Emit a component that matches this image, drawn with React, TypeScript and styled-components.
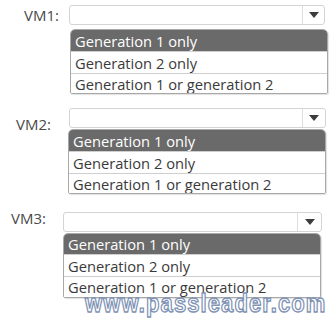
import styled, { createGlobalStyle } from 'styled-components';

const GlobalStyle = createGlobalStyle`
  *, *::before, *::after {
    box-sizing: border-box;
  }
  html, body {
    margin: 0;
    padding: 0;
    background: #ffffff;
  }
  body {
    font-family: 'Open Sans', 'Noto Sans', sans-serif;
  }
`;

const Page = styled.div`
  position: relative;
  width: 333px;
  height: 319px;
  overflow: hidden;
  display: flex;
  flex-direction: column;
`;

const Block = styled.div<{ $top: number; $left: number }>`
  display: flex;
  margin-top: ${({ $top }) => $top}px;
  padding-left: ${({ $left }) => $left}px;
`;

const Label = styled.div<{ $width: number; $offset: number }>`
  width: ${({ $width }) => $width}px;
  flex-shrink: 0;
  margin-top: ${({ $offset }) => $offset}px;
  font-size: 15px;
  color: #4a4a4a;
  line-height: 20px;
`;

const Column = styled.div<{ $width: number }>`
  width: ${({ $width }) => $width}px;
  display: flex;
  flex-direction: column;
`;

const Select = styled.div<{ $arrow: number; $gap: number }>`
  display: grid;
  grid-template-columns: 1fr ${({ $arrow }) => $arrow}px;
  height: 20px;
  margin-bottom: ${({ $gap }) => $gap}px;
  border: 1px solid #d4d4d4;
  border-radius: 3px;
  background: #fff;
`;

const ArrowCell = styled.div`
  border-left: 1px solid #dcdcdc;
  display: flex;
  align-items: center;
  justify-content: center;
`;

const Arrow = styled.div`
  width: 0;
  height: 0;
  border-left: 5px solid transparent;
  border-right: 5px solid transparent;
  border-top: 6px solid #3c3c3c;
`;

const List = styled.div<{ $shift: number; $extra: number }>`
  margin-left: ${({ $shift }) => $shift}px;
  margin-right: ${({ $extra }) => $extra}px;
  border: 1px solid #a8a8a8;
  border-radius: 5px 5px 2px 2px;
  overflow: hidden;
  box-shadow: 1px 1px 1px rgba(0, 0, 0, 0.12);
`;

const Row = styled.div<{ $selected?: boolean; $height: number }>`
  height: ${({ $height }) => $height}px;
  display: flex;
  align-items: center;
  padding-left: 4px;
  font-size: 14.7px;
  color: ${({ $selected }) => ($selected ? '#ffffff' : '#3a3a3a')};
  background: ${({ $selected }) => ($selected ? '#6a6a6a' : '#ffffff')};
  & + & {
    border-top: 1px solid #cfcfcf;
  }
`;

const Watermark = styled.div`
  position: absolute;
  left: 85px;
  top: 297px;
  font-family: 'Liberation Sans', Arial, sans-serif;
  font-weight: bold;
  font-size: 22px;
  letter-spacing: 1.1px;
  line-height: 12px;
  color: #ffffff;
  -webkit-text-stroke: 1.2px #7f93b5;
  white-space: nowrap;
  transform: scaleY(1.15);
  transform-origin: top left;
`;

const OPTIONS = ['Generation 1 only', 'Generation 2 only', 'Generation 1 or generation 2'];

type BlockSpec = {
  name: string;
  top: number;
  labelLeft: number;
  selectLeft: number;
  labelOffset: number;
  width: number;
  arrow: number;
  gap: number;
  listShift: number;
  listExtra: number;
  rowHeights: number[];
};

const BLOCKS: BlockSpec[] = [
  {
    name: 'VM1:',
    top: 5,
    labelLeft: 24,
    selectLeft: 69,
    labelOffset: 0,
    width: 256,
    arrow: 22,
    gap: 4,
    listShift: 1,
    listExtra: -3,
    rowHeights: [21, 22, 20],
  },
  {
    name: 'VM2:',
    top: 14,
    labelLeft: 16,
    selectLeft: 69,
    labelOffset: 6,
    width: 257,
    arrow: 23,
    gap: 1,
    listShift: -1,
    listExtra: 0,
    rowHeights: [21, 22, 20],
  },
  {
    name: 'VM3:',
    top: 18,
    labelLeft: 11,
    selectLeft: 63,
    labelOffset: -4,
    width: 259,
    arrow: 24,
    gap: 1,
    listShift: 0,
    listExtra: 1,
    rowHeights: [20, 22, 21],
  },
];

export default function App() {
  return (
    <Page>
      <GlobalStyle />
      {BLOCKS.map((b) => (
        <Block key={b.name} $top={b.top} $left={b.labelLeft}>
          <Label $width={b.selectLeft - b.labelLeft} $offset={b.labelOffset}>
            {b.name}
          </Label>
          <Column $width={b.width}>
            <Select $arrow={b.arrow} $gap={b.gap}>
              <div />
              <ArrowCell>
                <Arrow />
              </ArrowCell>
            </Select>
            <List $shift={b.listShift} $extra={b.listExtra}>
              {OPTIONS.map((opt, i) => (
                <Row key={opt} $selected={i === 0} $height={b.rowHeights[i]}>
                  {opt}
                </Row>
              ))}
            </List>
          </Column>
        </Block>
      ))}
      <Watermark>www.passleader.com</Watermark>
    </Page>
  );
}
